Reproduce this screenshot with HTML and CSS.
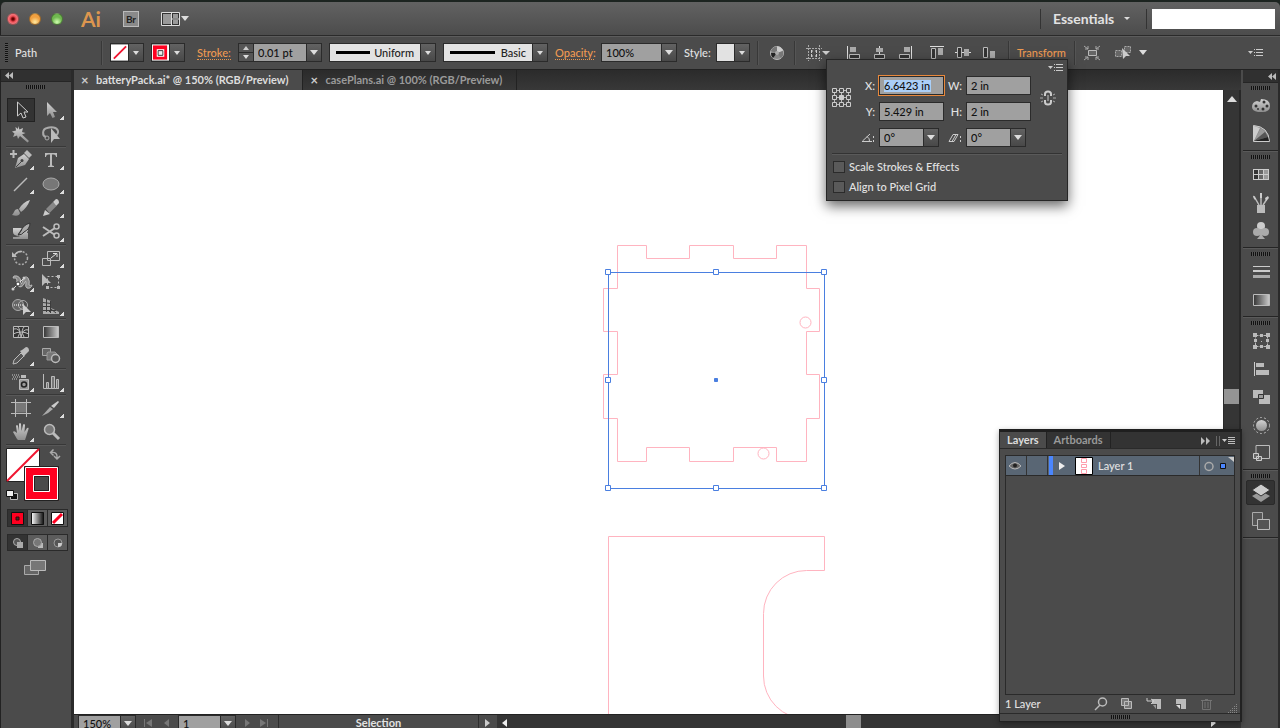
FILE: index.html
```html
<!DOCTYPE html>
<html lang="en">
<head>
<meta charset="utf-8">
<title>batteryPack.ai</title>
<link rel="stylesheet" href="styles.css">
</head>
<body>
<svg class="defs" aria-hidden="true">
  <defs>
    <linearGradient id="steel" x1="0" y1="0" x2="0" y2="1"><stop offset="0" stop-color="#d2d2d2"/><stop offset="1" stop-color="#8f8f8f"/></linearGradient>
    <linearGradient id="ramp" x1="0" y1="0" x2="1" y2="0"><stop offset="0" stop-color="#333"/><stop offset="1" stop-color="#ccc"/></linearGradient>
    <linearGradient id="wb" x1="0" y1="0" x2="1" y2="0"><stop offset="0" stop-color="#fff"/><stop offset="1" stop-color="#111"/></linearGradient>
  </defs>
</svg>
<div class="app">
  <header class="titlebar">
    <div class="lights">
      <button class="light red" aria-label="Close"></button>
      <button class="light amber" aria-label="Minimize"></button>
      <button class="light green" aria-label="Zoom"></button>
    </div>
    <span class="logo">Ai</span>
    <button class="bridge">Br</button>
    <button class="arrange" aria-label="Arrange documents">
      <svg width="28" height="16" viewBox="0 0 28 16"><path d="M.5 1.500h18v13H.5z" fill="#333" stroke="#ddd"/><path d="M2 3h8v10H2zM12 3h5v4h-5zM12 9h5v4h-5z" fill="#999"/><path d="M10.500 2v12M11 8h7" stroke="#ddd"/><path d="M20 5h8l-4 5z" fill="#ddd"/></svg>
    </button>
    <div class="workspace">
      <button class="essentials">Essentials <i class="caret tiny"></i></button>
      <input class="search" type="text" aria-label="Search">
    </div>
  </header>

  <section class="controlbar">
    <i class="vgrip"></i>
    <span class="kind">Path</span>
    <i class="sep"></i>
    <button class="combo" aria-label="Fill"><svg class="sw" width="18" height="17" viewBox="0 0 18 17"><path d="M0 0h18v17H0z" fill="#fff"/><path d="M3 15 16 2" stroke="#f01530" stroke-width="2"/></svg><span class="dd"><i class="caret small"></i></span></button>
    <button class="combo" aria-label="Stroke color"><svg class="sw" width="18" height="17" viewBox="0 0 18 17"><path d="M0 0h18v17H0z" fill="#fff"/><path d="M1 1h15v15H1z" fill="#ff0020"/><path d="M5 5h8v8H5z" fill="#fff"/><path d="M6.500 6.500h5v5h-5z" fill="#eee" stroke="#333"/></svg><span class="dd"><i class="caret small"></i></span></button>
    <a class="link stroke" href="#stroke">Stroke:</a>
    <span class="combo"><span class="step"><button aria-label="Increase"><i class="caret up small"></i></button><button aria-label="Decrease"><i class="caret small"></i></button></span><input class="field w52" type="text" value="0.01 pt" aria-label="Stroke weight"><button class="dd" aria-label="Weights"><i class="caret"></i></button></span>
    <button class="combo profile"><span class="face"><i class="line"></i>Uniform</span><span class="dd"><i class="caret small"></i></span></button>
    <button class="combo brush"><span class="face"><i class="line long"></i>Basic</span><span class="dd"><i class="caret small"></i></span></button>
    <a class="link" href="#opacity">Opacity:</a>
    <span class="combo"><input class="field w60" type="text" value="100%" aria-label="Opacity"><button class="dd" aria-label="Opacity presets"><i class="caret"></i></button></span>
    <span class="stylelabel">Style:</span>
    <button class="combo" aria-label="Style"><svg class="sw" width="18" height="17"><path d="M0 0h18v17H0z" fill="#e2e2e2"/></svg><span class="dd"><i class="caret small"></i></span></button>
    <i class="sep"></i>
    <button class="icon w22" aria-label="Recolor artwork"><svg width="16" height="16" viewBox="0 0 16 16"><circle cx="8" cy="8" r="6.500" fill="#888" stroke="#bbb"/><path d="M8 8V1.500A6.500 6.500 0 0 1 14 6z" fill="#ccc"/><path d="M8 8 14 6a6.500 6.500 0 0 1-2 7z" fill="#777"/><path d="M8 8 4 13A6.500 6.500 0 0 1 2 8z" fill="#222"/><path d="M8 8 2 6A6.500 6.500 0 0 1 8 1.500z" fill="#777"/><circle cx="8" cy="8" r="2" fill="#aaa"/></svg></button>
    <i class="sep"></i>
    <button class="icon w30" aria-label="Align to"><svg width="26" height="18" viewBox="0 0 26 18"><path d="M1 4.500h16M1 14.500h16M3.500 1v16M14.500 1v16" stroke="#aaa" stroke-dasharray="2 1"/><path d="M6 7h2M10 7h2M6 12h2M10 12h2M6.500 6v3M11.500 6v3M6.500 10v3M11.500 10v3" stroke="#ccc"/><path d="M17 7h8l-4 4z" fill="#ccc"/></svg></button>
    <span class="aligns">
      <button class="icon" aria-label="Align left"><svg width="16" height="16" viewBox="0 0 16 16"><path d="M1.500 1v14" stroke="#ddd"/><path d="M4 2h6v5H4z" fill="#aaa"/><path d="M3.500 9.500h10v4h-10z" fill="#333" stroke="#bbb"/></svg></button>
      <button class="icon" aria-label="Align center"><svg width="16" height="16" viewBox="0 0 16 16"><path d="M7.500 1v14" stroke="#ddd"/><path d="M4 3h7v4H4z" fill="#aaa"/><path d="M2.500 9.500h10v4h-10z" fill="#333" stroke="#bbb"/></svg></button>
      <button class="icon" aria-label="Align right"><svg width="16" height="16" viewBox="0 0 16 16"><path d="M13.500 1v14" stroke="#ddd"/><path d="M6 2h6v5H6z" fill="#aaa"/><path d="M1.500 9.500h10v4h-10z" fill="#333" stroke="#bbb"/></svg></button>
    </span>
    <span class="aligns second">
      <button class="icon" aria-label="Align top"><svg width="16" height="16" viewBox="0 0 16 16"><path d="M1 1.500h14" stroke="#ddd"/><path d="M2.500 3.500h4v10h-4z" fill="#333" stroke="#bbb"/><path d="M9 3h5v7H9z" fill="#aaa"/></svg></button>
      <button class="icon" aria-label="Align middle"><svg width="16" height="16" viewBox="0 0 16 16"><path d="M0 7.500h16" stroke="#ddd"/><path d="M2.500 2.500h4v10h-4z" fill="#333" stroke="#bbb"/><path d="M9 4h5v7H9z" fill="#aaa"/></svg></button>
      <button class="icon" aria-label="Align bottom"><svg width="16" height="16" viewBox="0 0 16 16"><path d="M1 14.500h14" stroke="#ddd"/><path d="M2.500 2.500h4v10h-4z" fill="#333" stroke="#bbb"/><path d="M9 6h5v7H9z" fill="#aaa"/></svg></button>
    </span>
    <i class="sep late"></i>
    <a class="link transformlink" href="#transform">Transform</a>
    <i class="sep"></i>
    <button class="icon w18" aria-label="Isolate"><svg width="16" height="16" viewBox="0 0 16 16"><path d="M4.500 5.500h8v5h-8z" fill="#666" stroke="#bbb"/><path d="m0 1 4 3M16 1l-4 3M0 15l4-3M16 15l-4-3M4 1v3H1M12 1v3h3M4 15v-3H1M12 15v-3h3" fill="none" stroke="#aaa"/></svg></button>
    <button class="icon w18 similar" aria-label="Select similar"><svg width="18" height="16" viewBox="0 0 18 16"><path d="M1.500 5.500h6v6h-6zM10.500 1.500h6v6h-6z" fill="#666" stroke="#aaa" stroke-dasharray="2 1"/><path d="m8 3 1 11 3-3 4 0z" fill="#ccc"/></svg></button>
    <button class="icon" aria-label="Similar options"><i class="caret"></i></button>
    <button class="icon panelmenu" aria-label="Panel menu"><svg width="15" height="10" viewBox="0 0 15 10"><path d="M0 3h5L2.500 6z" fill="#ccc"/><path d="M6 1.500h1M8 1.500h7M6 4.500h1M8 4.500h7M6 7.500h1M8 7.500h7" stroke="#ccc"/></svg></button>

    <form class="transform">
      <button class="icon popmenu" type="button" aria-label="Transform menu"><svg width="15" height="10" viewBox="0 0 15 10"><path d="M0 3h5L2.500 6z" fill="#ccc"/><path d="M6 1.500h1M8 1.500h7M6 4.500h1M8 4.500h7M6 7.500h1M8 7.500h7" stroke="#ccc"/></svg></button>
      <div class="coords">
        <svg class="refpoint" width="20" height="20" viewBox="0 0 20 20"><path d="M3 2.500h14M3 9.500h14M3 16.500h14M2.500 3v14M9.500 3v14M16.500 3v14" stroke="#bbb"/><g fill="#4b4b4b" stroke="#ccc"><path d="M.5.5h4v4h-4zM7.500.5h4v4h-4zM14.500.5h4v4h-4zM.5 7.500h4v4h-4zM14.500 7.500h4v4h-4zM.5 14.500h4v4h-4zM7.500 14.500h4v4h-4zM14.500 14.500h4v4h-4z"/><path d="M7.500 7.500h4v4h-4z" fill="#ccc"/></g></svg>
        <div class="grid">
          <label for="tx">X:</label><input id="tx" class="field active" type="text" value="6.6423 in">
          <label for="tw">W:</label><input id="tw" class="field" type="text" value="2 in">
          <label for="ty">Y:</label><input id="ty" class="field" type="text" value="5.429 in">
          <label for="th">H:</label><input id="th" class="field" type="text" value="2 in">
          <label for="ta" aria-label="Rotate"><svg width="14" height="10" viewBox="0 0 14 10"><path d="M1 8.500h10M1.500 8 9 1M6 3.500q3 2 2.500 5" fill="none" stroke="#ccc"/><path d="M12.500 3v2M12.500 7v2" stroke="#ccc"/></svg></label>
          <span class="combo"><input id="ta" class="field w44" type="text" value="0°"><button class="dd" type="button" aria-label="Angles"><i class="caret"></i></button></span>
          <label for="ts" aria-label="Shear"><svg width="14" height="10" viewBox="0 0 14 10"><path d="M1 8.500h5l4-7H5zM4 8.500l4-7" fill="none" stroke="#ccc"/><path d="M12.500 3v2M12.500 7v2" stroke="#ccc"/></svg></label>
          <span class="combo"><input id="ts" class="field w44" type="text" value="0°"><button class="dd" type="button" aria-label="Shear angles"><i class="caret"></i></button></span>
        </div>
        <button class="icon chain" type="button" aria-label="Constrain proportions"><svg width="16" height="16" viewBox="0 0 16 16"><path d="M5 6V4q0-2.500 3-2.500T11 4v2M5 10v2q0 2.500 3 2.500t3-2.500v-2" fill="none" stroke="#ccc" stroke-width="2"/><path d="M8 5v6" stroke="#888" stroke-width="2"/><path d="M0 8h3M13 8h3M1 4l2 1M15 4l-2 1M1 12l2-1M15 12l-2-1" stroke="#aaa"/></svg></button>
      </div>
      <div class="checks">
        <label><input type="checkbox">Scale Strokes &amp; Effects</label>
        <label><input type="checkbox">Align to Pixel Grid</label>
      </div>
    </form>
  </section>

  <main class="workarea">
    <aside class="toolbox">
      <button class="collapse" aria-label="Collapse tools"><svg width="9" height="7" viewBox="0 0 9 7"><path d="M4 0v7L0 3.500zM8 0v7L4 3.500z" fill="#bbb"/></svg></button>
      <i class="grip"></i>
      <div class="tools">
        <button class="tool on" aria-label="Selection"><svg viewBox="0 0 24 24"><path d="M8.500 4v14l3.500-3 2 5 3-1-2-5h4z" fill="#333" stroke="#ccc"/></svg></button>
        <button class="tool more" aria-label="Direct selection"><svg viewBox="0 0 24 24"><path d="M8 4v14l3-3 2.500 5 2.500-1-2-5h4z" fill="url(#steel)"/></svg></button>
        <button class="tool" aria-label="Magic wand"><svg viewBox="0 0 24 24"><path d="m9 4 1.500 3.500L14 6l-1 4 3.500 1-3.500 1.500L20 19l-1.500 1.500L11 14l-2 3-1-3.500L4 15l1.500-3.500L3 9.500l4-1-.5-3.500L9 7z" fill="url(#steel)"/></svg></button>
        <button class="tool" aria-label="Lasso"><svg viewBox="0 0 24 24"><path d="M7 15c-4-1-4-8 1-9 4-1.500 10-1 11 3 .5 3-1 4-3 5" fill="none" stroke="#aaa" stroke-width="2"/><circle cx="8" cy="16" r="2" fill="none" stroke="#aaa"/><path d="M12 6v15l3-4h6z" fill="#bbb"/></svg></button>
        <i class="rule"></i>
        <button class="tool more" aria-label="Pen"><svg viewBox="0 0 24 24"><path d="M4.500 2v8M1 6h7" stroke="#bbb" stroke-width="2"/><path d="m6 20 3-10 6-4 5 5-4 6z" fill="url(#steel)"/><path d="m15 5 3-3 5 5-3 3z" fill="#bbb"/><path d="m7 19 6-6" stroke="#444"/><circle cx="13" cy="12.500" r="1.500" fill="#444"/></svg></button>
        <button class="tool more" aria-label="Type"><svg viewBox="0 0 24 24"><path d="M6 5h12v4h-1q0-2.500-2.500-2.500H13V17q0 1 2 1v1H9v-1q2 0 2-1V6.500H9.500Q7 6.500 7 9H6z" fill="#bbb"/></svg></button>
        <button class="tool more" aria-label="Line"><svg viewBox="0 0 24 24"><path d="m5 19 13-13" stroke="#bbb" stroke-width="1.500"/></svg></button>
        <button class="tool more" aria-label="Ellipse"><svg viewBox="0 0 24 24"><ellipse cx="12" cy="12" rx="8" ry="6" fill="#777" stroke="#aaa"/></svg></button>
        <button class="tool" aria-label="Paintbrush"><svg viewBox="0 0 24 24"><path d="M21 4q-7 2-11 9l2 3q6-4 9-12zM9 13q-3 0-4 3-1 2-2 3 7 2 8-2z" fill="url(#steel)"/></svg></button>
        <button class="tool more" aria-label="Pencil"><svg viewBox="0 0 24 24"><path d="m4 20 2-6 5 4zM14 6l3-3q3 0 3 4l-3 3z" fill="#ccc"/><path d="m7 13 7-7 3.500 4-7 7z" fill="#888"/></svg></button>
        <button class="tool" aria-label="Blob brush"><svg viewBox="0 0 24 24"><path d="M4 8h9l-4 6h3l5-4h2l-1 3h1v6H4v-2q6 0 7-1-7 0-7-4z" fill="url(#steel)"/><path d="M21 3q-7 2-9 8l-3 4q4 0 6-3 6-3 6-9z" fill="#aaa" stroke="#333"/></svg></button>
        <button class="tool more" aria-label="Scissors"><svg viewBox="0 0 24 24"><path d="m4 7 12 8M4 16l12-8" stroke="#bbb" stroke-width="2"/><circle cx="17.500" cy="6.500" r="2.500" fill="none" stroke="#bbb" stroke-width="1.500"/><circle cx="17.500" cy="15.500" r="2.500" fill="none" stroke="#bbb" stroke-width="1.500"/></svg></button>
        <i class="rule"></i>
        <button class="tool more" aria-label="Rotate"><svg viewBox="0 0 24 24"><circle cx="12" cy="12" r="6.500" fill="none" stroke="#aaa" stroke-width="1.500" stroke-dasharray="2 1.500"/><path d="M5 11a7 7 0 0 1 8-5.500" fill="none" stroke="#bbb" stroke-width="1.500"/><path d="M3 6v5h5z" fill="#bbb"/></svg></button>
        <button class="tool more" aria-label="Scale"><svg viewBox="0 0 24 24"><path d="M8.500 5.500h12v9h-12zM3.500 12.500h8v7h-8z" fill="none" stroke="#bbb"/><path d="m12 12 5-4M14 7.500h4V11" fill="none" stroke="#ddd"/></svg></button>
        <button class="tool more" aria-label="Width"><svg viewBox="0 0 24 24"><path d="M4 8q0-3 4-2 5 2 3 8 1 2 3-4 2-5 5-2 2 3 1 7 1 1 3 0-1 4-5 3-2-1-1-5 0-3-1-1-3 7-7 4-2-2-1-6 0-3-4-2z" fill="#888" stroke="#bbb"/><path d="m4 19 11-11" stroke="#ddd"/><circle cx="9" cy="14" r="2" fill="#fff" stroke="#333"/><circle cx="4" cy="19" r="1.500" fill="#ccc"/><circle cx="15" cy="8" r="1.500" fill="#ccc"/></svg></button>
        <button class="tool" aria-label="Free transform"><svg viewBox="0 0 24 24"><path d="M8.500 6.500h11v11h-11z" fill="none" stroke="#bbb" stroke-dasharray="2 2"/><path d="M3 4v12l3-3h6z" fill="#bbb"/><path d="M18 5h3v3h-3zM18 16h3v3h-3zM7 16h3v3H7z" fill="#bbb"/></svg></button>
        <button class="tool more" aria-label="Shape builder"><svg viewBox="0 0 24 24"><circle cx="9" cy="11" r="5.500" fill="#666" stroke="#aaa"/><circle cx="14" cy="11" r="4.500" fill="none" stroke="#aaa"/><path d="M5 11h9" stroke="#fff" stroke-dasharray="1 1"/><path d="M14 10v11l3-3h5z" fill="#ccc"/></svg></button>
        <button class="tool more" aria-label="Perspective grid"><svg viewBox="0 0 24 24"><path d="M4 4l8 3v7l8 4v2H4z" fill="#aaa"/><path d="M4 8.500l8 1M4 12.500h8M4 16.500h13M7.500 5v13M11.500 7v12M12 19l-3-3M17 19l-5-4" stroke="#3c3c3c"/></svg></button>
        <i class="rule"></i>
        <button class="tool" aria-label="Mesh"><svg viewBox="0 0 24 24"><path d="M4.500 6.500h15v11h-15z" fill="#333" stroke="#bbb"/><path d="M4 9q8-2 8 9M20 10q-7-2-8 8M8 6q5 4 1 11M16 6q-5 4-1 11M4 14q8-4 16 0" fill="none" stroke="#bbb"/></svg></button>
        <button class="tool" aria-label="Gradient"><svg viewBox="0 0 24 24"><path d="M4.500 6.500h15v11h-15z" fill="url(#ramp)" stroke="#bbb"/></svg></button>
        <button class="tool more" aria-label="Eyedropper"><svg viewBox="0 0 24 24"><path d="m4 20 1-4 7-7 3 3-7 7z" fill="#555" stroke="#bbb"/><path d="m11 7 2-1 4-3q3 0 3 4l-4 4-1 2z" fill="#bbb"/></svg></button>
        <button class="tool" aria-label="Blend"><svg viewBox="0 0 24 24"><path d="M3.500 4.500h8v7h-8z" fill="#666" stroke="#aaa"/><path d="M9 8h7l2 2v6H8V9z" fill="#777" stroke="#999"/><circle cx="16.500" cy="14.500" r="4" fill="#555" stroke="#bbb" stroke-width="1.500"/></svg></button>
        <i class="rule"></i>
        <button class="tool more" aria-label="Symbol sprayer"><svg viewBox="0 0 24 24"><path d="M3 5h7M4 7h7M3 9h5" stroke="#ccc" stroke-dasharray="1 1"/><path d="M12 5h5v3h-5z" fill="#bbb"/><path d="M10.500 9.500h9v10h-9z" fill="#999" stroke="#bbb"/><circle cx="15" cy="14.500" r="2.500" fill="#999" stroke="#222" stroke-width="1.500"/></svg></button>
        <button class="tool more" aria-label="Graph"><svg viewBox="0 0 24 24"><path d="M4.500 4v14.500H20" fill="none" stroke="#bbb"/><path d="M7.500 12.500h2v6h-2zM12.500 6.500h3v12h-3zM17.500 9.500h2v9h-2z" fill="#777" stroke="#bbb"/></svg></button>
        <i class="rule"></i>
        <button class="tool" aria-label="Artboard"><svg viewBox="0 0 24 24"><path d="M6.500 6.500h11v10h-11z" fill="#777"/><path d="M2 6.500h20M2 17.500h20M6.500 3v18M17.500 3v18" stroke="#bbb"/></svg></button>
        <button class="tool more" aria-label="Slice"><svg viewBox="0 0 24 24"><path d="m3 20 8-9 3 2q-5 5-11 7z" fill="#aaa"/><path d="m12 10 7-5 1 1-5 6z" fill="#ccc"/></svg></button>
        <button class="tool more" aria-label="Hand"><svg viewBox="0 0 24 24"><path d="M8 19 4 12q1-2 4 1L7 6q1-2 2 0l1 5V4q1-2 2 0l.5 7L14 5q1-2 2 0l-.5 7L18 8q2-1 1.500 1L17 17l-1 3H9z" fill="url(#steel)"/></svg></button>
        <button class="tool" aria-label="Zoom"><svg viewBox="0 0 24 24"><circle cx="10.500" cy="9.500" r="5" fill="#777" stroke="#bbb" stroke-width="1.500"/><path d="m14 13 6 6" stroke="#bbb" stroke-width="3"/></svg></button>
        <i class="rule"></i>
      </div>
      <svg class="fillstroke" width="54" height="56" viewBox="0 0 54 56"><path d="M1.500 1.500h33v33h-33z" fill="#fff" stroke="#222"/><path d="M2 34 34 2" stroke="#f01530" stroke-width="2"/><path d="M19.500 19.500h34v34h-34z" fill="#ff0020" stroke="#222"/><path d="M20.500 20.500h32v32h-32z" fill="none" stroke="#fff"/><path d="M28.500 28.500h16v16h-16z" fill="#4b4b4b" stroke="#fff"/><path d="M29.500 29.500h14v14h-14z" fill="none" stroke="#222"/><path d="M46 5.500q7-1 6 6M48.500 2.500l-3 3 3 3M49 9l3 3 3-3" fill="none" stroke="#aaa" stroke-width="1.500"/><path d="M5.500 46.500h7v6h-7z" fill="#111" stroke="#bbb"/><path d="M1.500 43.500h7v6h-7z" fill="#eee" stroke="#111"/></svg>
      <div class="modes">
        <button class="on" aria-label="Color"><svg width="13" height="13" viewBox="0 0 13 13"><path d="M.5.5h12v12H.5z" fill="#ff0020" stroke="#111"/><path d="M5 5h3v3H5z" fill="#333" stroke="#400"/></svg></button>
        <button aria-label="Gradient fill"><svg width="13" height="13" viewBox="0 0 13 13"><path d="M.5.5h12v12H.5z" fill="url(#wb)" stroke="#111"/></svg></button>
        <button aria-label="None"><svg width="13" height="13" viewBox="0 0 13 13"><path d="M.5.5h12v12H.5z" fill="#fff" stroke="#111"/><path d="M2 11 11 2" stroke="#ff0020" stroke-width="3"/></svg></button>
      </div>
      <div class="modes draw">
        <button class="on" aria-label="Draw normal"><svg width="12" height="12"><circle cx="5" cy="5" r="3.500" fill="#555" stroke="#aaa"/><path d="M5 5h6v6H5z" fill="#aaa"/></svg></button>
        <button aria-label="Draw behind"><svg width="12" height="12"><path d="M6 6h5v5H6z" fill="#bbb"/><circle cx="5.500" cy="5.500" r="4" fill="#777" stroke="#aaa"/></svg></button>
        <button aria-label="Draw inside"><svg width="12" height="12"><circle cx="6" cy="6" r="4" fill="#555" stroke="#999"/><path d="M6 6h4q0 4-4 4z" fill="#ccc"/></svg></button>
      </div>
      <button class="icon screenmode" aria-label="Screen mode"><svg width="22" height="17" viewBox="0 0 22 17"><path d="M.5 6.500h14v9H.5z" fill="#666" stroke="#aaa"/><path d="M6.500 1.500h15v10h-15z" fill="#777" stroke="#bbb"/></svg></button>
    </aside>

    <section class="document">
      <nav class="tabs">
        <a class="tab on" href="#battery"><span class="x">×</span>batteryPack.ai* @ 150% (RGB/Preview)</a>
        <a class="tab" href="#case"><span class="x">×</span>casePlans.ai @ 100% (RGB/Preview)</a>
      </nav>
      <div class="view">
        <div class="canvas">
          <svg width="1149" height="624" viewBox="74 90 1149 624">
            <g fill="none" stroke="#ffb4c0">
              <path d="M617.500 245.500h29v13h43v-13h44v13h43v-13h30v43h13v43h-13v43h13v44h-13v43h-30v-14h-43v14h-44v-14h-43v14h-29v-43h-14v-44h14v-43h-14v-43h14z"/>
              <circle cx="805.500" cy="322.500" r="5.500"/><circle cx="763.500" cy="453.500" r="5.500"/>
              <path d="M608.500 720V536.500h216v34H806.500a43 43 0 0 0-43 43V676a43 43 0 0 0 43 43"/>
            </g>
            <g fill="#fff" stroke="#4a7fe0">
              <path d="M608.500 272.500h216v216h-216z" fill="none"/>
              <path d="M605.500 269.500h5v5h-5zM713.500 269.500h5v5h-5zM821.500 269.500h5v5h-5zM605.500 377.500h5v5h-5zM821.500 377.500h5v5h-5zM605.500 485.500h5v5h-5zM713.500 485.500h5v5h-5zM821.500 485.500h5v5h-5z"/>
              <path d="M714.500 378.500h3v3h-3z" fill="#4a7fe0"/>
            </g>
          </svg>
        </div>
        <div class="vscroll"><i class="caret up big"></i><i class="thumb"></i></div>
      </div>
      <footer class="status">
        <span class="combo"><input class="field w42" type="text" value="150%" aria-label="Zoom level"><button class="dd" aria-label="Zoom levels"><i class="caret"></i></button></span>
        <span class="pager"><svg width="28" height="10" viewBox="0 0 28 10"><path d="M1 1h1v8H1zM9 1v8L3 5zM26 1v8l-5-4z" fill="#777"/></svg></span>
        <span class="combo"><input class="field w42" type="text" value="1" aria-label="Artboard number"><button class="dd" aria-label="Artboards"><i class="caret"></i></button></span>
        <span class="pager"><svg width="28" height="10" viewBox="0 0 28 10"><path d="M2 1v8l5-4zM17 1v8l6-4zM24 1h1v8h-1z" fill="#777"/></svg></span>
        <span class="state">Selection</span>
        <button class="statemenu" aria-label="Status menu"><svg width="6" height="8"><path d="M0 0v8l5-4z" fill="#ccc"/></svg></button>
        <div class="hscroll"><svg width="6" height="8"><path d="M6 0v8L1 4z" fill="#eee"/></svg><i class="thumb"></i><svg width="6" height="8"><path d="M0 0v8l5-4z" fill="#eee"/></svg></div>
      </footer>
    </section>

    <aside class="dock">
      <button class="collapse right" aria-label="Expand panels"><svg width="9" height="7" viewBox="0 0 9 7"><path d="M4 0v7L0 3.500zM8 0v7L4 3.500z" fill="#bbb"/></svg></button>
      <div class="dgroup"><i class="grip"></i>
        <button aria-label="Color"><svg viewBox="0 0 24 24"><path d="M3 13q0-5 5-6l3 1 1-3q9 0 9 7 0 6-8 6H9q-6-1-6-5z" fill="url(#steel)"/><g fill="#333"><circle cx="7" cy="12" r="1.500"/><circle cx="15" cy="8" r="1.500"/><circle cx="18" cy="12" r="1.500"/><circle cx="14" cy="15" r="1.500"/><circle cx="9" cy="15" r="1"/></g></svg></button>
        <button aria-label="Color guide"><svg viewBox="0 0 24 24"><path d="M4.500 3.500q15 1 16 16h-16z" fill="#888" stroke="#ccc"/><path d="M5 19V4l6 2z" fill="#ccc"/><path d="m5 19 7-13 4 4z" fill="#999"/><path d="m5 19 11-9 3 5z" fill="#555"/><path d="m5 19 14-4 1 4z" fill="#222"/></svg></button>
      </div>
      <div class="dgroup"><i class="grip"></i>
        <button aria-label="Swatches"><svg viewBox="0 0 24 24"><path d="M4 6h16v11H4z" fill="#ccc"/><path d="M5 7h4v4H5zM5 12h4v4H5z" fill="#333"/><path d="M10 7h4v4h-4zM10 12h4v4h-4z" fill="#666"/><path d="M15 7h4v4h-4zM15 12h4v4h-4z" fill="#999"/></svg></button>
        <button aria-label="Brushes"><svg viewBox="0 0 24 24"><path d="M8 14h8v8H8z" fill="#bbb"/><path d="M10 14 6 7M12 14V5M14 14l4-6" stroke="#bbb" stroke-width="1.500"/><path d="M4 5q2-1 3 3l-1 1q-2-2-2-4zM11 2h2v5h-2zM16 7l3-2 1 2-3 3z" fill="#ccc"/></svg></button>
        <button aria-label="Symbols"><svg viewBox="0 0 24 24"><circle cx="12" cy="7" r="4" fill="#ccc"/><circle cx="8" cy="13" r="4" fill="#aaa"/><circle cx="16" cy="13" r="4" fill="#aaa"/><path d="M11 10h2l.5 7 2.500 3H8l2.500-3z" fill="#aaa"/></svg></button>
      </div>
      <div class="dgroup"><i class="grip"></i>
        <button aria-label="Stroke"><svg viewBox="0 0 24 24"><path d="M4 6.500h17" stroke="#ccc"/><path d="M4 11h17" stroke="#ccc" stroke-width="2"/><path d="M4 16.500h17" stroke="#aaa" stroke-width="3"/></svg></button>
        <button aria-label="Gradient panel"><svg viewBox="0 0 24 24"><path d="M4.500 6.500h16v11h-16z" fill="url(#ramp)" stroke="#bbb"/></svg></button>
      </div>
      <div class="dgroup"><i class="grip"></i>
        <button aria-label="Transform panel"><svg viewBox="0 0 24 24"><path d="M6.500 6.500h12v11h-12z" fill="none" stroke="#bbb" stroke-dasharray="3 1"/><path d="M4 4h4v4H4zM17 4h4v4h-4zM4 16h4v4H4zM17 16h4v4h-4zM11 5h3v3h-3zM11 16h3v3h-3zM5 10h3v3H5zM17 10h3v3h-3zM12 12h1v1h-1z" fill="#bbb"/></svg></button>
        <button aria-label="Align"><svg viewBox="0 0 24 24"><path d="M5.500 5v14" stroke="#ccc"/><path d="M7 6h8v4H7zM7 13h13v5H7z" fill="#bbb"/></svg></button>
        <button aria-label="Pathfinder"><svg viewBox="0 0 24 24"><path d="M4 5h10v8H4zM10 10h11v9H10z" fill="#bbb"/><path d="M9.500 9.500h5v4h-5z" fill="#999" stroke="#333"/></svg></button>
        <button aria-label="Appearance"><svg viewBox="0 0 24 24"><circle cx="12.500" cy="12.500" r="5.500" fill="url(#steel)"/><circle cx="12.500" cy="12.500" r="8" fill="none" stroke="#bbb" stroke-dasharray="2 2"/></svg></button>
        <button aria-label="Graphic styles"><svg viewBox="0 0 24 24"><path d="M7 12V4.500h13.500v13H13" fill="none" stroke="#bbb"/><path d="M4.500 12.500h5v5h-5zM7.500 15.500h5v4h-5z" fill="#666" stroke="#ccc"/></svg></button>
      </div>
      <div class="dgroup"><i class="grip"></i>
        <button class="on" aria-label="Layers panel"><svg viewBox="0 0 24 24"><path d="m3 15 9-5 9 5-9 6z" fill="#999"/><path d="m3 9 9-6 9 6-9 6z" fill="#ccc" stroke="#333"/></svg></button>
        <button aria-label="Artboards panel"><svg viewBox="0 0 24 24"><path d="M3.500 3.500h10v13h-10z" fill="#555" stroke="#aaa"/><path d="M8.500 10.500h12v10h-12z" fill="#555" stroke="#bbb"/></svg></button>
      </div>
    </aside>

    <section class="layers">
      <header class="ltabs">
        <button class="ltab on">Layers</button><button class="ltab">Artboards</button>
        <span class="lctl"><svg width="34" height="10" viewBox="0 0 34 10"><path d="M0 1v8l4-4zM5 1v8l4-4z" fill="#bbb"/><path d="M15.500 0v10M18.500 0v10" stroke="#666"/><path d="M21 3h5l-2.500 3z" fill="#ccc"/><path d="M27 1.500h7M27 3.500h7M27 5.500h7M27 7.500h7" stroke="#bbb"/></svg></span>
      </header>
      <div class="list">
        <div class="row">
          <button class="cell eye" aria-label="Visibility"><svg width="14" height="10" viewBox="0 0 14 10"><path d="M1 5q6-7 12 0-6 6-12 0z" fill="#666" stroke="#bbb"/><circle cx="7" cy="4.500" r="2" fill="#222"/></svg></button>
          <button class="cell" aria-label="Lock"></button>
          <span class="name"><i class="chip"></i><svg width="6" height="8"><path d="M0 0v8l6-4z" fill="#eee"/></svg><svg class="thumbnail" width="18" height="18"><path d="M.5.5h17v17H.5z" fill="#fff" stroke="#000"/><g fill="none" stroke="#ff9cab"><path d="M6.500 1.500h5v4h-5zM6.500 7.500h5v3h-5zM6.500 12.500h5v4h-5z"/></g></svg>Layer 1</span>
          <span class="cell target"><svg width="34" height="20" viewBox="0 0 34 20"><circle cx="9" cy="10.500" r="4" fill="none" stroke="#aaa" stroke-width="1.500"/><path d="M20.500 7.500h5v5h-5z" fill="#4a86ff" stroke="#111"/><path d="M28 1h6v5z" fill="#ccc"/></svg></span>
        </div>
      </div>
      <footer class="lfoot">
        <span>1 Layer</span>
        <span class="lbtns">
          <button class="icon" aria-label="Locate"><svg width="14" height="14"><circle cx="8.500" cy="5" r="4" fill="none" stroke="#bbb" stroke-width="1.500"/><path d="m6 8-5 5" stroke="#bbb" stroke-width="1.500"/></svg></button>
          <button class="icon" aria-label="Clipping mask"><svg width="14" height="14"><path d="M1.500 1.500h7v7h-7zM4.500 4.500h7v7h-7z" fill="#777" stroke="#bbb"/></svg></button>
          <button class="icon" aria-label="New sublayer"><svg width="16" height="14"><path d="M6 2h9v10h-4V7H6z" fill="#bbb"/><path d="M1 1v3h6M5 2l3 2-3 3" fill="none" stroke="#ccc"/><path d="m7 8 3 4V8z" fill="#999"/></svg></button>
          <button class="icon" aria-label="New layer"><svg width="14" height="14"><path d="M2 2h10v10H7V7H2z" fill="#bbb"/><path d="m2 8 4 4V8z" fill="#ddd"/></svg></button>
          <button class="icon" aria-label="Delete"><svg width="14" height="14"><path d="M1 3.500h11M5 2.500h3M2.500 4v8.500h8V4M5 5v6M8 5v6" fill="none" stroke="#727272"/></svg></button>
        </span>
        <svg class="resize" width="10" height="10"><path d="M0 9.500h10M2 7.500h8M4 5.500h6M6 3.500h4M8 1.500h2" stroke="#888" stroke-dasharray="1 1"/></svg>
      </footer>
      <div class="lbase"><i class="grip"></i></div>
    </section>
  </main>
</div>
</body>
</html>
```
FILE: styles.css
```css
* { box-sizing: border-box; }
body {
  margin: 0;
  height: 100vh;
  overflow: hidden;
  background: #1c2420;
  color: #e2e2e2;
  font: 500 11px/16px Lato, "Open Sans", sans-serif;
}
button, input { font: inherit; color: inherit; margin: 0; padding: 0; border: 0; border-radius: 0; background: none; }
svg { display: block; flex: none; }
i { display: block; flex: none; }
.defs { position: absolute; width: 0; height: 0; }
.app { height: 100vh; padding-top: 2px; display: flex; flex-direction: column; }

.caret { width: 0; height: 0; border: 4px solid transparent; border-top: 5px solid #ddd; border-bottom: 0; }
.caret.small { border-width: 4px 3px 0; }
.caret.tiny { border-width: 3px 3px 0; }
.caret.up { border-top: 0; border-bottom: 4px solid #ccc; }
.caret.big { border-width: 0 5px 6px; border-bottom-color: #ddd; }
.icon { display: flex; align-items: center; justify-content: center; }
.grip { width: 19px; height: 4px; margin: 0 auto; background: repeating-linear-gradient(90deg, #111 0 1px, #555 1px 2px); }

/* Title bar */
.titlebar {
  flex: none; height: 33px; display: flex; align-items: center; padding: 0 5px 0 6px;
  background: linear-gradient(#626262, #4c4c4c);
  border-radius: 5px 5px 0 0; border-left: 1px solid #222;
}
.lights { display: flex; gap: 10px; }
.light { width: 12px; height: 12px; border-radius: 50%; border: 1px solid #0005; }
.red { background: radial-gradient(circle at 50% 50%, #600 0 1px, #f05058 3px, #ffb0b0); }
.amber { background: radial-gradient(circle at 50% 80%, #ffe9a0, #f0a040 5px); }
.green { background: radial-gradient(circle at 50% 80%, #d0ffb0, #70b850 5px); }
.logo { margin-left: 18px; width: 42px; font-size: 21px; line-height: 28px; font-weight: 700; color: #dc964f; }
.bridge { width: 16px; height: 16px; background: #8a8a8a; border: 1px solid #bbb; color: #222; font-size: 10px; line-height: 14px; font-weight: 700; }
.arrange { margin-left: 22px; }
.workspace { margin-left: auto; display: flex; align-items: center; }
.essentials {
  display: flex; align-items: center; justify-content: space-between; width: 107px; height: 20px; padding: 0 16px 0 12px;
  border: solid #333; border-width: 0 1px; font-size: 14px; font-weight: 700;
}
.search { width: 123px; height: 20px; margin-left: 5px; background: #fff; color: #222; }

/* Control bar */
.controlbar {
  position: relative; z-index: 2; flex: none; height: 35px; display: flex; align-items: center; gap: 7px;
  padding: 0 17px 0 5px; background: #4b4b4b;
  border-top: 1px solid #2a2a2a; border-bottom: 1px solid #222; box-shadow: inset 0 1px #5c5c5c;
}
.vgrip { width: 3px; height: 19px; background: repeating-linear-gradient(#111 0 1px, #555 1px 2px); }
.kind { width: 79px; }
.sep { width: 2px; height: 24px; background: #383838; border-right: 1px solid #555; }
.sep.late { margin-left: 4px; }
.combo { display: flex; flex: none; height: 19px; border: 1px solid #2b2b2b; }
.combo .sw { width: 17px; }
.dd { flex: none; width: 15px; display: flex; align-items: center; justify-content: center; background: linear-gradient(#626262, #484848); border-left: 1px solid #2b2b2b; }
.link { color: #ef9a52; border-bottom: 1px dotted #e8954e; line-height: 13px; width: 39px; text-decoration: none; }
.link.stroke { width: 34px; margin-left: 5px; }
.link.transformlink { width: 50px; }
.field { height: 100%; background: #a0a0a0; color: #111; padding: 0 4px; min-width: 0; }
.w52 { width: 52px; }
.w60 { width: 59px; }
.w44 { width: 43px; }
.w42 { width: 41px; }
.step { width: 15px; display: flex; flex-direction: column; background: #555; border-right: 1px solid #2b2b2b; }
.step button { flex: 1; display: flex; align-items: center; justify-content: center; }
.step button + button { border-top: 1px solid #2b2b2b; }
.face { flex: 1; display: flex; align-items: center; justify-content: space-between; padding: 0 6px; background: #e2e2e2; color: #222; }
.profile { width: 107px; }
.brush { width: 105px; }
.line { width: 34px; height: 3px; background: #000; }
.line.long { width: 45px; }
.stylelabel { width: 25px; white-space: nowrap; }
.w22 { width: 21px; }
.w30 { width: 30px; }
.w18 { width: 18px; }
.aligns { display: flex; gap: 10px; padding-left: 6px; }
.aligns.second { padding-left: 8px; }
.similar { margin-left: 6px; }
.panelmenu { margin-left: auto; }

/* Transform popup */
.transform {
  position: absolute; left: 826px; top: 23px; width: 242px; padding: 3px 5px 5px;
  background: #4b4b4b; border: 1px solid #262626; box-shadow: 0 5px 12px #0009;
}
.popmenu { margin-left: auto; margin-right: -1px; }
.coords { display: flex; margin-top: 3px; padding-bottom: 6px; border-bottom: 1px solid #333; box-shadow: 0 1px #5a5a5a; }
.refpoint { margin-top: 12px; }
.grid { display: grid; grid-template-columns: 25px 65px 18px 65px; grid-auto-rows: 19px; column-gap: 2px; row-gap: 7px; }
.grid label { display: flex; align-items: center; justify-content: flex-end; padding-right: 2px; }
.grid > .field { border: 1px solid #2b2b2b; }
.grid > .active { outline: 1px solid #e8883c; background: linear-gradient(#abcff8, #abcff8) 4px 3px / 47px 12px no-repeat #a0a0a0; }
.grid .combo { justify-self: start; }
.chain { margin: 14px 0 0 9px; align-self: flex-start; }
.checks { display: flex; flex-direction: column; gap: 4px; padding-top: 5px; }
.checks label { display: flex; align-items: center; gap: 4px; padding-left: 1px; }
.checks input { appearance: none; width: 12px; height: 12px; border: 1px solid #2b2b2b; background: #5a5a5a; }

/* Work area */
.workarea { position: relative; flex: 1; min-height: 0; display: flex; }
.collapse { display: flex; align-items: center; width: 100%; height: 12px; padding-left: 4px; background: #303030; border-bottom: 1px solid #252525; }
.collapse.right { justify-content: flex-end; height: 13px; padding-right: 1px; }

.toolbox { flex: none; width: 74px; background: #4b4b4b; border-left: 1px solid #222; border-right: 3px solid #2a2a2a; }
.toolbox > .grip { margin: 3px 25px 9px; }
.tools { display: grid; grid-template-columns: 30px 30px; grid-auto-rows: auto; padding-left: 5px; }
.tool { position: relative; height: 24px; display: flex; align-items: center; justify-content: center; }
.tool svg { width: 24px; height: 24px; }
.tool.on { background: #333; border: 1px solid #222; margin: 0 1px; }
.tool.more::after { content: ""; position: absolute; right: 2px; bottom: 2px; width: 4px; height: 4px; background: linear-gradient(135deg, transparent 50%, #ddd 50%); }
.rule { grid-column: 1 / 3; height: 2px; background: #383838; border-bottom: 1px solid #585858; }
.fillstroke { margin: 1px 0 0 4px; overflow: visible; }
.modes { display: flex; width: 61px; height: 18px; margin: 6px 0 0 6px; border: 1px solid #2a2a2a; }
.modes button { flex: 1; display: flex; align-items: center; justify-content: center; background: #5c5c5c; }
.modes button + button { border-left: 1px solid #2a2a2a; }
.modes .on { background: #333; }
.modes.draw { height: 17px; margin-top: 7px; }
.screenmode { margin: 8px 0 0 23px; }

/* Document */
.document { flex: 1; min-width: 0; display: flex; flex-direction: column; background: #333; }
.tabs { flex: none; height: 20px; display: flex; background: linear-gradient(#2b2b2b, #383838); }
.tab { display: flex; align-items: center; height: 20px; padding: 0 14px 0 7px; color: #9a9a9a; font-weight: 700; white-space: nowrap; text-decoration: none; border-right: 1px solid #222; }
.tab.on { background: #4b4b4b; color: #ddd; }
.x { width: 15px; font-size: 13px; color: #ccc; }
.view { flex: 1; min-height: 0; display: flex; }
.canvas { flex: 1; min-width: 0; overflow: hidden; background: #fff; }
.vscroll { flex: none; width: 18px; display: flex; flex-direction: column; align-items: center; padding-top: 6px; background: #353535; border-left: 1px solid #2a2a2a; border-right: 2px solid #282828; }
.vscroll .thumb { width: 15px; height: 15px; margin-top: 287px; background: #949494; }
.status { flex: none; height: 14px; display: flex; align-items: flex-start; overflow: hidden; background: #4b4b4b; border-top: 1px solid #222; padding-left: 4px; }
.status .combo { height: 17px; }
.pager { width: 42px; padding: 3px 0 0 7px; }
.state { width: 201px; height: 13px; padding-top: 1px; border: solid #2d2d2d; border-width: 0 1px; text-align: center; line-height: 13px; font-weight: 700; }
.statemenu { width: 18px; padding: 4px 0 0 6px; }
.hscroll { flex: 1; height: 14px; display: flex; padding: 4px 24px 0 4px; background: #353535; }
.hscroll .thumb { width: 15px; height: 14px; margin: -4px auto 0 339px; background: #8d8d8d; }

/* Panel dock */
.dock { flex: none; width: 39px; padding-left: 2px; background: #4b4b4b; border-right: 2px solid #2a2a2a; }
.dgroup { padding: 3px 0 2px; border-bottom: 1px solid #252525; box-shadow: 0 1px #5a5a5a; margin-bottom: 1px; }
.dgroup .grip { margin-bottom: 2px; }
.dgroup button { display: flex; align-items: center; justify-content: center; width: 29px; height: 28px; margin: 0 auto; }
.dgroup svg { width: 24px; height: 24px; }
.dgroup .on { background: #333; border: 1px solid #2a2a2a; border-radius: 2px; height: 25px; margin: 1px auto 2px; }

/* Layers panel */
.layers {
  position: absolute; right: 38px; bottom: 6px; width: 243px; height: 293px; display: flex; flex-direction: column;
  background: #4b4b4b; border: 1px solid #222; border-top: 3px solid #1f1f1f; border-right-width: 2px; box-shadow: 0 2px 6px #0005;
}
.ltabs { flex: none; height: 17px; display: flex; background: #333; border-bottom: 1px solid #2a2a2a; }
.ltab { padding: 0 7px; line-height: 16px; color: #999; font-weight: 700; border-right: 1px solid #222; }
.ltab.on { background: #4b4b4b; color: #ddd; }
.lctl { margin: 4px 5px 0 auto; }
.list { flex: 1; margin: 6px 5px 0; border: 1px solid #2a2a2a; }
.row { display: flex; height: 20px; background: #596674; border-bottom: 1px solid #2a2a2a; }
.cell { width: 21px; border-right: 1px solid #333; display: flex; align-items: center; }
.eye { padding-left: 2px; }
.name { flex: 1; display: flex; align-items: center; }
.chip { width: 4px; height: 19px; margin: 0 6px 0 1px; background: #4a86ff; }
.thumbnail { margin: 0 5px 0 10px; }
.target { width: 35px; border-right: 0; border-left: 1px solid #333; }
.lfoot { flex: none; height: 18px; display: flex; align-items: center; padding: 0 2px 0 5px; }
.lbtns { display: flex; gap: 12px; margin-left: auto; }
.resize { margin-left: 14px; align-self: flex-end; }
.lbase { flex: none; height: 8px; border-top: 1px solid #2a2a2a; padding-top: 1px; }
```
